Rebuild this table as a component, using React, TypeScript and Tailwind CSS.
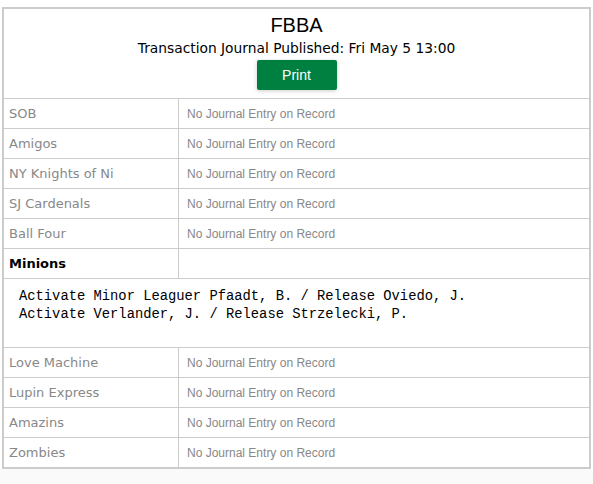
import React from "react";

const teamsA = ["SOB", "Amigos", "NY Knights of Ni", "SJ Cardenals", "Ball Four"];
const teamsB = ["Love Machine", "Lupin Express", "Amazins", "Zombies"];

function Row({ name }: { name: string }) {
  return (
    <div className="flex h-[30px] border-t border-[#cccccc]">
      <div className="w-[175px] shrink-0 border-r border-[#cccccc] pl-[5px] flex items-center text-[13px] text-[#888888] [font-family:'DejaVu_Sans',Verdana,sans-serif]">
        {name}
      </div>
      <div className="flex-1 pl-[8px] flex items-center text-[12px] text-[#888888] [font-family:'Liberation_Sans',Tahoma,sans-serif]">
        No Journal Entry on Record
      </div>
    </div>
  );
}

export default function App() {
  return (
    <div className="w-[593px] h-[484px] bg-white flex flex-col">
      <div className="pt-[7px] px-[2px] bg-white">
        <div className="border-2 border-[#cccccc] bg-white">
          <div className="h-[89px] flex flex-col items-center">
            <div className="mt-[3px] text-[20px] leading-[26px] text-black [font-family:'Liberation_Sans',Arial,sans-serif]">FBBA</div>
            <div className="mt-[1px] text-[13.8px] leading-[18px] text-black [font-family:'DejaVu_Sans',Verdana,sans-serif]">
              Transaction Journal Published: Fri May 5 13:00
            </div>
            <button className="mt-[3px] w-[80px] h-[30px] rounded-[2px] bg-[#008040] text-white text-[14px] shadow-[0_1px_4px_rgba(0,0,0,0.2)] [font-family:'Liberation_Sans',Arial,sans-serif]">
              Print
            </button>
          </div>
          {teamsA.map((t) => (
            <Row key={t} name={t} />
          ))}
          <div className="flex h-[30px] border-t border-[#cccccc]">
            <div className="w-[175px] shrink-0 border-r border-[#cccccc] pl-[5px] flex items-center text-[13px] font-bold text-black [font-family:'DejaVu_Sans',Verdana,sans-serif]">
              Minions
            </div>
            <div className="flex-1" />
          </div>
          <div className="h-[69px] border-t border-[#cccccc] pl-[15px] pt-[9px] text-[13.8px] leading-[18px] text-black [font-family:'Liberation_Mono',Consolas,monospace] whitespace-pre">
            <div>Activate Minor Leaguer Pfaadt, B. / Release Oviedo, J.</div>
            <div>Activate Verlander, J. / Release Strzelecki, P.</div>
          </div>
          {teamsB.map((t) => (
            <Row key={t} name={t} />
          ))}
        </div>
      </div>
      <div className="flex-1 bg-[#fafafa]" />
    </div>
  );
}
